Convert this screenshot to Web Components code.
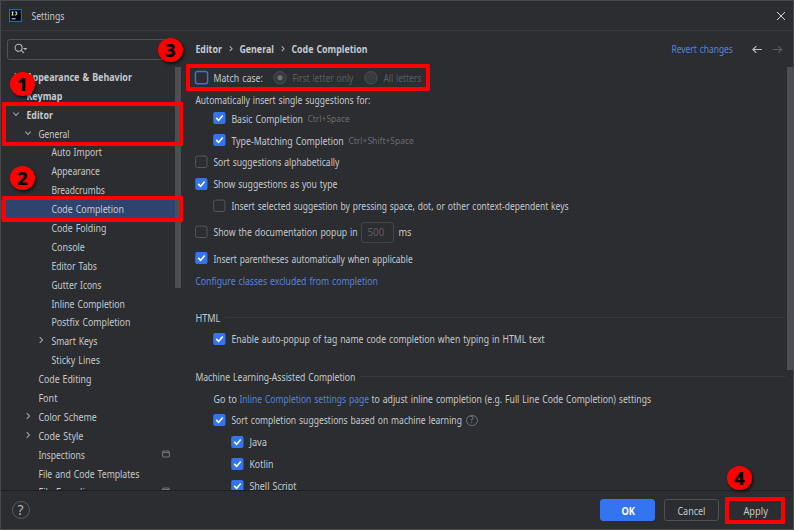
<!DOCTYPE html>
<html lang="en">
<head>
<meta charset="utf-8">
<title>Settings</title>
<style>
html,body{margin:0;height:100%;overflow:hidden;background:#2b2d30}
body{font:10px/16px "Noto Sans","Open Sans",sans-serif;color:#c6c9ce}
</style>
</head>
<body>
<settings-window></settings-window>
<script>
const define = (name, markup, setup) => customElements.define(name, class extends HTMLElement {
  constructor() {
    super();
    const t = document.createElement('template');
    t.innerHTML = markup;
    this.attachShadow({mode: 'open'}).append(t.content.cloneNode(true));
  }
  connectedCallback() { if (setup) setup(this, this.shadowRoot); }
});

/* A label whose text is condensed or expanded to an exact width. */
define('ui-text', `<style>
:host{display:inline-block;flex:none;white-space:nowrap;height:16px;line-height:16px}
span{display:inline-block;transform-origin:0 50%;word-spacing:.8px}
</style><span></span>`, (el, root) => {
  const s = root.querySelector('span');
  s.textContent = el.getAttribute('t');
  const w = +el.getAttribute('w');
  el.style.width = w + 'px';
  const n = s.getBoundingClientRect().width;
  if (n) s.style.transform = `translateX(.4px) scaleX(${w / n})`;
});

define('ui-check', `<style>
:host{display:block;flex:none;width:12.5px;height:12.5px;margin-right:5.5px}
svg{display:block;overflow:visible}
.on,.tick{display:none}
:host([on]) .on,:host([on]) .tick{display:block}
:host([on]) .off,:host([focus]) .off{display:none}
.focus{display:none}:host([focus]) .focus{display:block}
</style><svg width="12.5" height="12.5" viewBox="0 0 12.5 12.5" fill="none">
<rect class="off" x=".6" y=".1" width="11.4" height="11.4" rx="2" stroke="#55575c"/>
<rect class="focus" x=".4" y="-.4" width="12.2" height="12.2" rx="2.2" stroke="#3871e1" stroke-width="1.5"/>
<rect class="on" x=".2" y="-.1" width="12.3" height="12.1" rx="2" fill="#3574f0"/>
<path class="tick" d="M3.2 5.9 5.6 8.4 9.7 3.5" stroke="#fff" stroke-width="1.6"/></svg>`);

define('ui-radio', `<style>
:host{display:block;flex:none;width:14px;height:14px}
svg{display:block}circle+circle{display:none}:host([on]) circle+circle{display:block}
</style><svg width="14" height="14" viewBox="0 0 14 14"><circle cx="7" cy="6.8" r="6.2" fill="#393a3e" stroke="#4d4f53"/><circle cx="7" cy="6.8" r="2.5" fill="#707276"/></svg>`);

define('ui-row', `<style>
:host{display:flex;align-items:center;height:16px;flex:none}
</style><slot></slot>`, el => {
  el.style.marginTop = (el.getAttribute('gap') || 0) + 'px';
  el.style.paddingLeft = (el.getAttribute('in') || 0) + 'px';
});

define('ui-rule', `<style>:host{display:block;flex:1;height:1px;background:#36383c;margin-left:5px}</style>`);

define('tree-item', `<style>
:host{display:flex;align-items:center;height:18.9px;flex:none}
:host([b]){font-weight:700}
:host([sel]){background:#2e436e}
svg{display:none;flex:none;width:8px;height:8px;margin-right:6px;fill:none;stroke:#9da0a8;stroke-width:1.1;transform:translateY(-1px)}
:host([arrow=down]) .d,:host([arrow=right]) .r,:host([mod]) .m{display:block}
.m{width:8px;height:8px;margin:0 5.5px 0 auto;stroke:#6f737a}
</style><svg class="d" viewBox="0 0 8 8"><path d="M1.3 2.7 4 5.4 6.7 2.7"/></svg>
<svg class="r" viewBox="0 0 8 8"><path d="M2.7 1.2 5.5 4 2.7 6.8"/></svg>
<slot></slot><svg class="m" viewBox="0 0 8 8"><rect x=".6" y="1" width="6.8" height="6" rx="1.2"/><path d="M.6 2.5h6.8"/></svg>`, el => {
  el.style.paddingLeft = (+el.getAttribute('x') - (el.hasAttribute('arrow') ? 14 : 0)) + 'px';
});

const tree = [
  ['Appearance & Behavior', 105.5, 25, 'b arrow="right"'], ['Keymap', 36, 25, 'b'], ['Editor', 26.5, 25, 'b arrow="down"'],
  ['General', 31, 37.2, 'arrow="down"'], ['Auto Import', 50.5, 49.6], ['Appearance', 48.5, 49.6], ['Breadcrumbs', 53.5, 49.6],
  ['Code Completion', 72.5, 49.6, 'sel'], ['Code Folding', 55, 49.6], ['Console', 33.5, 49.6], ['Editor Tabs', 45.5, 49.6],
  ['Gutter Icons', 50, 49.6], ['Inline Completion', 73.5, 49.6], ['Postfix Completion', 79, 49.6],
  ['Smart Keys', 46, 49.6, 'arrow="right"'], ['Sticky Lines', 48.5, 49.6], ['Code Editing', 53, 37.4], ['Font', 19, 37.4],
  ['Color Scheme', 58.5, 37.4, 'arrow="right"'], ['Code Style', 45, 37.4, 'arrow="right"'], ['Inspections', 46.5, 37.4, 'mod'],
  ['File and Code Templates', 101, 37.4], ['File Encodings', 62, 37.4, 'mod']
].map(([t, w, x, a = '']) => `<tree-item x="${x}" ${a}><ui-text t="${t.replace('&', '&amp;')}" w="${w}"></ui-text></tree-item>`).join('');

define('settings-sidebar', `<style>
:host{display:flex;flex-direction:column;width:180px;flex:none;overflow:hidden}
.search{box-sizing:border-box;height:21.5px;margin:7.5px 5px 7px 6px;border:1px solid #4e5157;border-radius:3px;display:flex;align-items:center;padding-left:6px}
.body{display:flex;flex:1;min-height:0}
.tree{display:flex;flex-direction:column;width:174px;padding-top:.4px;box-sizing:border-box;overflow:hidden}
.bar{width:6px;height:221px;background:#4d4e51}
</style>
<div class="search"><svg width="14" height="12" viewBox="0 0 14 12" fill="none" stroke="#b4b7bd" stroke-width="1.1"><circle cx="4.6" cy="4.8" r="3.5"/><path d="M7.2 7.4 10 10.2"/><path d="M9 5h4.4L11.2 7.2Z" fill="#b4b7bd" stroke="none"/></svg></div>
<div class="body"><div class="tree">${tree}</div><div class="bar"></div></div>`);

define('settings-content', `<style>
:host{display:flex;flex-direction:column;flex:1;min-width:0;overflow:hidden}
.head{display:flex;align-items:center;height:36px;padding-left:14px;font-weight:700;flex:none}
.head svg{flex:none}
.link{color:#5883d8;font-weight:400}
.body{display:flex;flex:1;min-height:0}
.page{display:flex;flex-direction:column;flex:1;min-width:0;padding:3px 0 0 14px;overflow:hidden}
.bar{width:6px;height:303px;background:#4d4e51;margin-left:2px}
.dim{color:#5a5d63}
.key{color:#696c72;font-size:9px;margin-left:4.5px}
.field{box-sizing:border-box;width:33.5px;height:21.5px;border:1px solid #43454a;border-radius:3px;margin:0 4px 0 3.5px;display:flex;align-items:center;padding-left:5.5px;flex:none;color:#5a5d63}
</style>
<div class="head">
<ui-text t="Editor" w="26.5"></ui-text>
<svg width="17.5" height="10" viewBox="0 0 18 10" fill="none" stroke="#aaadb4" stroke-width="1.1"><path d="M8 2.2 10.4 4.7 8 7.2"/></svg>
<ui-text t="General" w="34.5"></ui-text>
<svg width="17.5" height="10" viewBox="0 0 18 10" fill="none" stroke="#aaadb4" stroke-width="1.1"><path d="M8 2.2 10.4 4.7 8 7.2"/></svg>
<ui-text t="Code Completion" w="76"></ui-text>
<ui-text class="link" t="Revert changes" w="61.5" style="margin-left:304.3px"></ui-text>
<svg width="34" height="12" viewBox="0 0 34 12" fill="none" style="margin-left:18.5px" stroke-width="1.1"><path d="M10.8 6.5H2M5.3 3.1 1.9 6.5l3.4 3.4" stroke="#bfc1c7"/><path d="M21.8 6.5h8.8M27.3 3.1l3.4 3.4-3.4 3.4" stroke="#5a5d63"/></svg>
</div>
<div class="body"><div class="page">
<ui-row gap="0"><ui-check focus></ui-check><ui-text t="Match case:" w="49.5" style="margin-right:10.7px"></ui-text><ui-radio on></ui-radio><ui-text class="dim" t="First letter only" w="61" style="margin:0 11px 0 4.7px"></ui-text><ui-radio></ui-radio><ui-text class="dim" t="All letters" w="38" style="margin-left:5px"></ui-text></ui-row>
<ui-row gap="6"><ui-text t="Automatically insert single suggestions for:" w="175"></ui-text></ui-row>
<ui-row gap="2.5" in="18"><ui-check on></ui-check><ui-text t="Basic Completion" w="71.5"></ui-text><ui-text class="key" t="Ctrl+Space" w="42.5"></ui-text></ui-row>
<ui-row gap="6" in="18"><ui-check on></ui-check><ui-text t="Type-Matching Completion" w="112.3"></ui-text><ui-text class="key" t="Ctrl+Shift+Space" w="65.5"></ui-text></ui-row>
<ui-row gap="5.9"><ui-check></ui-check><ui-text t="Sort suggestions alphabetically" w="126"></ui-text></ui-row>
<ui-row gap="6"><ui-check on></ui-check><ui-text t="Show suggestions as you type" w="124"></ui-text></ui-row>
<ui-row gap="6" in="18"><ui-check></ui-check><ui-text t="Insert selected suggestion by pressing space, dot, or other context-dependent keys" w="337.2"></ui-text></ui-row>
<ui-row gap="10"><ui-check></ui-check><ui-text t="Show the documentation popup in" w="144.3"></ui-text><div class="field"><ui-text t="500" w="17"></ui-text></div><ui-text t="ms" w="13"></ui-text></ui-row>
<ui-row gap="10.3"><ui-check on></ui-check><ui-text t="Insert parentheses automatically when applicable" w="199.3"></ui-text></ui-row>
<ui-row gap="6.3"><ui-text class="link" t="Configure classes excluded from completion" w="182.5"></ui-text></ui-row>
<ui-row gap="21"><ui-text t="HTML" w="25"></ui-text><ui-rule></ui-rule></ui-row>
<ui-row gap="5.5" in="18"><ui-check on></ui-check><ui-text t="Enable auto-popup of tag name code completion when typing in HTML text" w="313.3"></ui-text></ui-row>
<ui-row gap="21.5"><ui-text t="Machine Learning-Assisted Completion" w="160"></ui-text><ui-rule></ui-rule></ui-row>
<ui-row gap="6" in="18"><ui-text t="Go to" w="23.5" style="margin-right:2.5px"></ui-text><ui-text class="link" t="Inline Completion settings page" w="129.7" style="margin-right:2px"></ui-text><ui-text t="to adjust inline completion (e.g. Full Line Code Completion) settings" w="279.7"></ui-text></ui-row>
<ui-row gap="5.5" in="18"><ui-check on></ui-check><ui-text t="Sort completion suggestions based on machine learning" w="230.5"></ui-text><help-mark style="--s:11.5px;margin-left:4.5px"></help-mark></ui-row>
<ui-row gap="6" in="36"><ui-check on></ui-check><ui-text t="Java" w="17.5"></ui-text></ui-row>
<ui-row gap="6" in="36"><ui-check on></ui-check><ui-text t="Kotlin" w="24"></ui-text></ui-row>
<ui-row gap="6" in="36"><ui-check on></ui-check><ui-text t="Shell Script" w="47"></ui-text></ui-row>
</div><div class="bar"></div></div>`);

define('help-mark', `<style>
:host{display:flex;flex:none;align-items:center;justify-content:center;box-sizing:border-box;width:var(--s);height:var(--s);border:1px solid var(--ring,#6f737a);border-radius:50%;color:var(--ink,#868a91);font-size:calc(var(--s)*var(--k,.72));line-height:1}
</style>?`);

define('ui-button', `<style>
:host{display:flex;flex:none;align-items:center;justify-content:center;box-sizing:border-box;width:54.5px;height:21.5px;border:1px solid #4e5157;border-radius:3px;padding-top:1px}
:host([primary]){background:#3574f0;border-color:#3574f0;color:#fff;font-weight:700}
</style><slot></slot>`);

/* Red numbered marks and frames drawn over the dialog. */
define('step-frame', `<style>
:host{position:absolute;box-sizing:border-box;border:4px solid #fe0000;border-radius:1px}
</style>`);
define('step-badge', `<style>
:host{position:absolute;width:24.5px;height:24px;border-radius:50%;background:#fe0000;color:#000;display:flex;align-items:center;justify-content:center;font:800 18.5px/24px "Noto Sans",sans-serif;box-shadow:1.5px 2px 3px rgba(0,0,0,.6)}
</style><slot></slot>`);

define('settings-window', `<style>
:host{display:flex;flex-direction:column;box-sizing:border-box;width:794px;height:530px;border:1px solid #47494a;background:#2b2d30;position:relative;overflow:hidden}
.title{display:flex;align-items:center;height:29px;border-bottom:1px solid #393b3e;padding:0 4px 0 8px;flex:none}
.title svg{flex:none}
.main{display:flex;flex:1;min-height:0}
.foot{display:flex;align-items:center;height:38px;border-top:1px solid #1e1f22;padding:0 11px 0 10.5px;flex:none}
.ok{margin-left:auto}
</style>
<div class="title"><svg width="13" height="13" viewBox="0 0 13 13"><rect x=".6" y=".6" width="11.8" height="11.8" fill="#000" stroke="#1769c9" stroke-width="1.2"/><path d="M2.6 3h2M3.6 3v3M2.6 6h2M6 3h1.8v2.2L7.1 6H5.8M2.6 9.8h4" fill="none" stroke="#fff" stroke-width=".9"/></svg>
<ui-text t="Settings" w="33" style="margin-left:9px"></ui-text>
<svg width="10" height="10" viewBox="0 0 10 10" style="margin:0 3px 0 auto" fill="none" stroke="#d5d7db" stroke-width="1"><path d="m1 1 8 8M9 1 1 9"/></svg></div>
<div class="main"><settings-sidebar></settings-sidebar><settings-content></settings-content></div>
<div class="foot"><help-mark style="--s:18px;--k:.78;--ring:#5a5d63;--ink:#b4b7bd"></help-mark>
<ui-button class="ok" primary><ui-text t="OK" w="13.5"></ui-text></ui-button>
<ui-button style="margin-left:9.5px"><ui-text t="Cancel" w="28"></ui-text></ui-button>
<ui-button style="margin-left:9px"><ui-text t="Apply" w="24.5"></ui-text></ui-button></div>
<step-frame style="left:1px;top:101px;width:181px;height:44px"></step-frame>
<step-frame style="left:1px;top:195px;width:181px;height:26px"></step-frame>
<step-frame style="left:185px;top:63px;width:244px;height:27px"></step-frame>
<step-frame style="left:724px;top:496px;width:60px;height:27px"></step-frame>
<step-badge style="left:9px;top:70.5px">1</step-badge>
<step-badge style="left:9px;top:165px">2</step-badge>
<step-badge style="left:157px;top:37px">3</step-badge>
<step-badge style="left:726px;top:465px">4</step-badge>`);
</script>
</body>
</html>
